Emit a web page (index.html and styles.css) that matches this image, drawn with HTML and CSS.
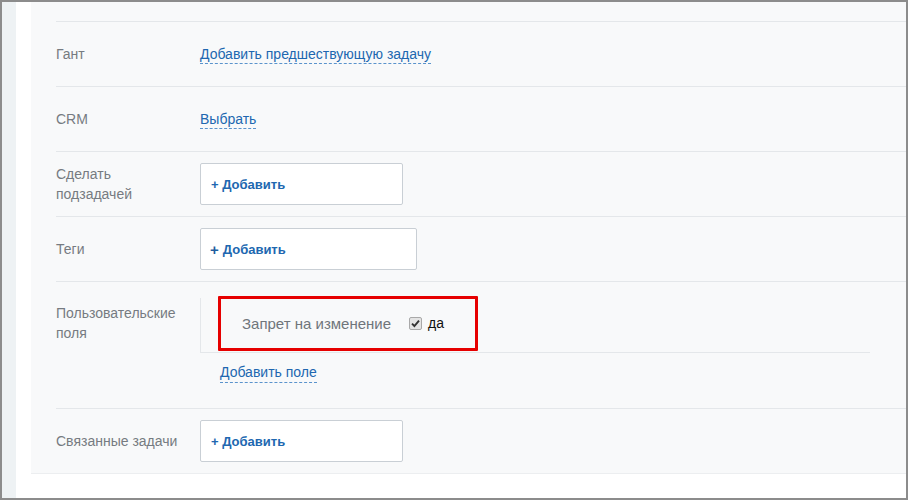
FILE: index.html
```
<!DOCTYPE html>
<html lang="ru">
<head>
    <meta charset="UTF-8">
    <meta name="viewport" content="width=device-width, initial-scale=1.0">
    <title>Задача</title>
    <link rel="stylesheet" href="styles.css">
</head>
<body>

    <div class="frame">
        <div class="side-strip"></div>
        <div class="page">
            <div class="panel">
                <div class="row-stub"></div>

                <div class="row">
                    <div class="label">Гант</div>
                    <div class="value"><a class="dash-link" href="#">Добавить предшествующую задачу</a></div>
                </div>

                <div class="row">
                    <div class="label">CRM</div>
                    <div class="value"><a class="dash-link" href="#">Выбрать</a></div>
                </div>

                <div class="row">
                    <div class="label">Сделать<br>подзадачей</div>
                    <div class="value"><div class="add-box">+ Добавить</div></div>
                </div>

                <div class="row">
                    <div class="label">Теги</div>
                    <div class="value"><div class="add-box add-box-wide"><span class="plus">+</span> Добавить</div></div>
                </div>

                <div class="row row-top">
                    <div class="label">Пользовательские<br>поля</div>
                    <div class="value value-fields">
                        <div class="field-block">
                            <div class="field">
                                <span class="field-name">Запрет на изменение</span>
                                <span class="check">
                                    <svg width="9" height="9" viewBox="0 0 9 9"><path d="M1 4.6 L3.4 7 L8 1.6" fill="none" stroke="#333" stroke-width="1.9"/></svg>
                                </span>
                                <span class="field-val">да</span>
                            </div>
                            <div class="mark"></div>
                        </div>
                        <a class="dash-link add-field" href="#">Добавить поле</a>
                    </div>
                </div>

                <div class="row">
                    <div class="label">Связанные задачи</div>
                    <div class="value"><div class="add-box">+ Добавить</div></div>
                </div>
            </div>
        </div>
    </div>

</body>
</html>
```

FILE: styles.css
```
* {
    box-sizing: border-box;
}

body {
    margin: 0;
    font-family: "Liberation Sans", Arial, sans-serif;
    font-size: 13px;
    background: #fff;
}

.frame {
    display: flex;
    width: 908px;
    height: 500px;
    border: 2px solid #8c8c8c;
    overflow: hidden;
}

.side-strip {
    width: 14px;
    background: #eef2f4;
}

.page {
    flex: 1;
    padding-left: 15px;
    background: #fff;
}

.panel {
    background: #f8f9fa;
    padding-left: 25px;
    border-bottom: 1px solid #eceef0;
}

.row-stub {
    height: 19px;
}

.row {
    display: flex;
    align-items: center;
    height: 65px;
    border-top: 1px solid #e4e7ea;
}

.row-top {
    align-items: flex-start;
    height: 127px;
}

.label {
    width: 144px;
    color: #767b81;
    font-size: 14px;
    line-height: 20px;
}

.row-top .label {
    padding-top: 21px;
}

.value {
    flex: 1;
}

.dash-link {
    color: #2067b0;
    text-decoration: none;
    font-size: 14px;
    border-bottom: 1px dashed #5a93cc;
    padding-bottom: 1px;
}

.add-box {
    width: 203px;
    height: 42px;
    background: #fff;
    border: 1px solid #c9cfd5;
    border-radius: 2px;
    padding-left: 10px;
    display: flex;
    align-items: center;
    color: #2067b0;
    font-weight: bold;
}

.add-box-wide {
    width: 217px;
    padding-left: 9px;
}

.plus {
    font-size: 15px;
    margin-right: 4px;
    color: #1f5d9e;
}

.value-fields {
    padding-top: 16px;
}

.field-block {
    position: relative;
    width: 670px;
    height: 55px;
    border-left: 1px solid #e4e7ea;
    border-bottom: 1px solid #e4e7ea;
}

.field {
    display: flex;
    align-items: center;
    height: 50px;
    padding-left: 41px;
}

.field-name {
    color: #6f757b;
    font-size: 15px;
}

.check {
    width: 13px;
    height: 13px;
    margin-left: 18px;
    border: 1px solid #a9a9a9;
    border-radius: 2px;
    background: #e4e4e4;
    display: flex;
    align-items: center;
    justify-content: center;
}

.field-val {
    margin-left: 6px;
    color: #111;
    font-size: 14px;
}

/* red annotation frame over the field */
.mark {
    position: absolute;
    left: 17px;
    top: -2px;
    width: 260px;
    height: 55px;
    border: 3px solid #e60000;
    border-radius: 1px;
}

.add-field {
    display: inline-block;
    margin-left: 20px;
    margin-top: 11px;
    line-height: 17px;
}
```
